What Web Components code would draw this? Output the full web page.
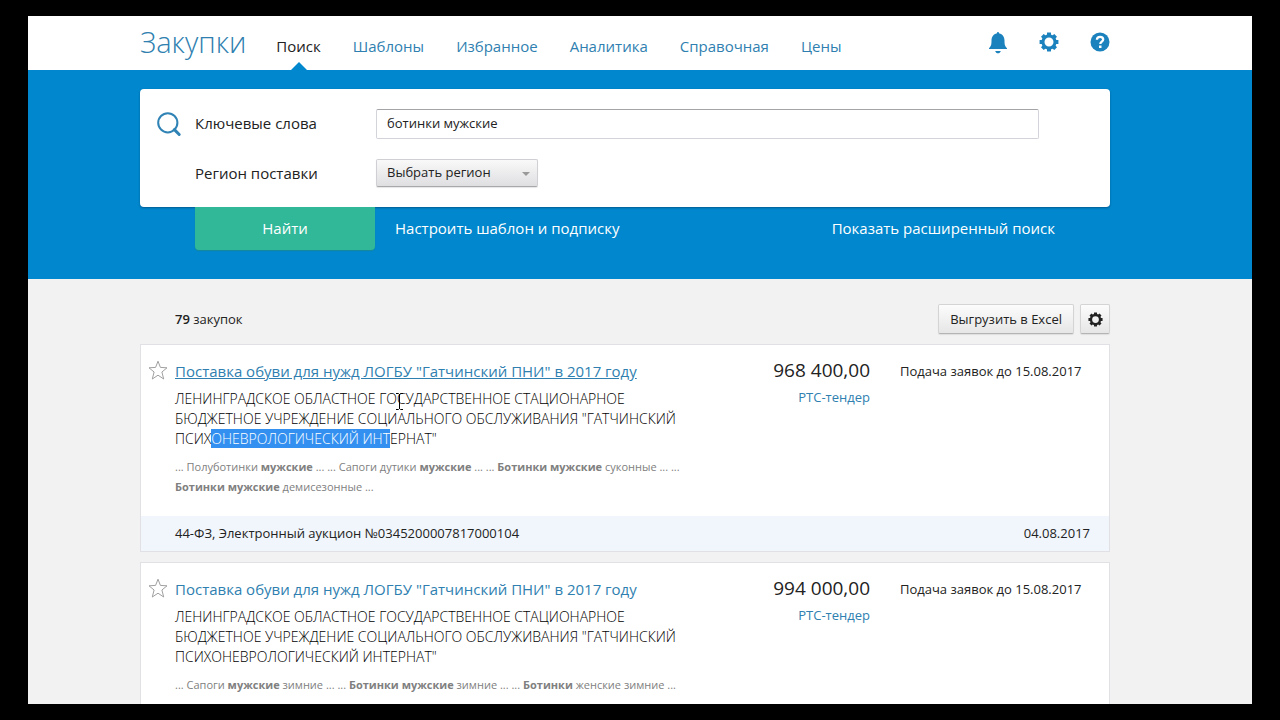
<!DOCTYPE html>
<html lang="ru">
<head>
<meta charset="utf-8">
<title>Закупки</title>
<style>
  html, body { margin: 0; height: 100%; }
  body {
    box-sizing: border-box;
    padding: 16px 28px;
    background: #000;
    color: #222;
    font: 13px/20px "Open Sans", "Noto Sans", sans-serif;
    overflow: hidden;
    --accent: #0087cd;
    --link: #2f7fb0;
    --gutter-left: 112px;
    --gutter-right: 142px;
  }
</style>
</head>
<body>
<purchase-app></purchase-app>

<script>
const define = (name, html, setup) => {
  const template = document.createElement('template');
  template.innerHTML = html;
  customElements.define(name, class extends HTMLElement {
    constructor() {
      super();
      this.attachShadow({ mode: 'open' }).append(template.content.cloneNode(true));
    }
    connectedCallback() { if (setup) setup(this, this.shadowRoot); }
  });
};

/* Icons */
const gearTeeth = (n, r1, r2, a, b) => {
  let d = '';
  for (let i = 0; i < n; i++) {
    const c = i * 2 * Math.PI / n;
    [[-a, r1], [-b, r2], [b, r2], [a, r1]].forEach(([o, r], k) => {
      d += (i || k ? 'L' : 'M') + (10 + r * Math.sin(c + o)).toFixed(2) + ' ' + (10 - r * Math.cos(c + o)).toFixed(2);
    });
  }
  return d + 'Z';
};
const icons = {
  bell: '<path fill="currentColor" d="M9 1.2C9 -.4 11 -.4 11 1.2 14.800 2 16.500 5 16.500 8.500 16.500 13 17 14.200 19 16.200V17H1V16.200C3 14.200 3.500 13 3.500 8.500 3.500 5 5.200 2 9 1.200ZM7.200 19H12.800C12.300 20.500 11.300 21.300 10 21.300S7.700 20.500 7.200 19Z"/>',
  gear: `<path fill="currentColor" fill-rule="evenodd" d="${gearTeeth(8, 7.6, 9.6, .28, .2)}M10 5.500A4.500 4.500 0 1 0 10 14.500A4.500 4.500 0 1 0 10 5.500Z"/>`,
  help: '<circle cx="10" cy="10" r="9.500" fill="currentColor"/><path d="M6.900 7.700C7 5.700 8.300 4.800 10.100 4.800 12 4.800 13.200 5.900 13.200 7.500 13.200 9.600 10.300 9.600 10.300 12" fill="none" stroke="#fff" stroke-width="2.300"/><path d="M9 13.500H11.500V16H9Z" fill="#fff"/>',
  search: '<circle cx="9" cy="9" r="8" fill="none" stroke="currentColor" stroke-width="1.700"/><path d="M14.500 14.700 18.500 18.700" stroke="currentColor" stroke-width="2.500" stroke-linecap="round"/>',
  star: '<path fill="#fff" stroke="#a0a0a0" stroke-width="1" stroke-linejoin="round" d="M10 1.200 12.400 7.400 19 7.800 13.900 12 15.700 19 10 15.200 4.300 19 6.100 12 1 7.800 7.600 7.400Z"/>'
};
define('ui-icon', `
  <style>
    :host { display: block; width: 20px; height: 20px; }
    svg { display: block; width: 100%; height: 100%; overflow: visible; }
  </style>
  <svg viewBox="0 0 20 20" aria-hidden="true"></svg>`,
  (host, root) => { root.querySelector('svg').innerHTML = icons[host.getAttribute('name')]; });

/* Top navigation */
define('nav-link', `
  <style>
    :host { display: flex; position: relative; }
    a { color: var(--link); font-size: 15px; line-height: 20px; padding: 20px 0 14px; text-decoration: none; }
    :host([active]) a { color: #222; }
    :host([active])::after {
      content: ""; position: absolute; left: calc(50% - 8px); bottom: 0;
      border: 8px solid transparent; border-top: 0; border-bottom-color: var(--accent);
    }
  </style>
  <a href="#"><slot></slot></a>`);

define('site-header', `
  <style>
    :host { display: flex; height: 54px; padding: 0 var(--gutter-right) 0 var(--gutter-left); background: #fff; color: var(--link); }
    .logo { color: var(--link); text-decoration: none; font-size: 29px; font-weight: 300; line-height: 52px; margin-right: 30px; }
    nav { display: flex; gap: 32px; }
    .tools { display: flex; gap: 31px; margin: 16px 0 0 auto; align-items: flex-start; color: #1c82bd; }
    button { display: block; padding: 0; border: 0; background: none; color: inherit; }
  </style>
  <a class="logo" href="#">Закупки</a>
  <nav>
    <nav-link active>Поиск</nav-link><nav-link>Шаблоны</nav-link><nav-link>Избранное</nav-link>
    <nav-link>Аналитика</nav-link><nav-link>Справочная</nav-link><nav-link>Цены</nav-link>
  </nav>
  <div class="tools">
    <button aria-label="Уведомления"><ui-icon name="bell"></ui-icon></button>
    <button aria-label="Настройки"><ui-icon name="gear"></ui-icon></button>
    <button aria-label="Помощь"><ui-icon name="help"></ui-icon></button>
  </div>`);

/* Search form */
define('search-form', `
  <style>
    :host { display: block; background: var(--accent); padding: 19px var(--gutter-right) 29px var(--gutter-left); }
    .panel {
      display: grid; grid-template-columns: 38px 181px 1fr; grid-template-rows: 30px 30px; row-gap: 20px;
      align-items: start; padding: 20px 71px 18px 17px; border-radius: 4px; background: #fff;
      box-shadow: 0 1px 2px rgba(0, 50, 90, .5);
    }
    .panel ui-icon { width: 24px; height: 24px; margin-top: 3px; color: #2f83b5; }
    label { font-size: 15px; line-height: 28px; }
    label[for=region] { grid-column: 2; }
    input, select { box-sizing: border-box; height: 30px; margin: 0; padding: 0 10px 2px; font: inherit; color: #222; border-radius: 2px; }
    input { width: 100%; border: 1px solid #d3d4da; border-top-color: #a4a4a8; background: #fff; outline: 0; }
    .select { position: relative; width: 162px; }
    .select::after { content: ""; position: absolute; right: 8px; top: 13px; border: 4px solid transparent; border-bottom: 0; border-top-color: #999; }
    select {
      display: block; appearance: none; width: 100%; height: 28px;
      border: 1px solid #d0d0d4; border-bottom-color: #a8a8ac;
      background: linear-gradient(#f9f9f9, #dfdfe2); box-shadow: 0 1px 1px rgba(0, 0, 0, .1);
    }
    .actions { display: flex; align-items: flex-start; padding: 0 55px; font-size: 15px; color: #fff; }
    .find { width: 180px; height: 43px; padding: 0 0 2px; border: 0; border-radius: 0 0 4px 4px; background: #30b899; color: #fff; font: inherit; margin-right: 20px; box-shadow: 0 1px 1px #16899b; }
    .actions a { color: #fff; text-decoration: none; line-height: 20px; margin-top: 11px; }
    .more { margin-left: auto; }
  </style>
  <form>
    <div class="panel">
      <ui-icon name="search"></ui-icon>
      <label for="words">Ключевые слова</label>
      <input id="words" type="text" value="ботинки мужские">
      <label for="region">Регион поставки</label>
      <div class="select"><select id="region"><option>Выбрать регион</option></select></div>
    </div>
    <div class="actions">
      <button class="find" type="button">Найти</button>
      <a href="#">Настроить шаблон и подписку</a>
      <a class="more" href="#">Показать расширенный поиск</a>
    </div>
  </form>`);

/* Results */
define('tool-button', `
  <style>
    :host { display: block; }
    button {
      display: flex; align-items: center; justify-content: center; box-sizing: border-box; height: 30px; min-width: 30px; padding: 0 11px;
      border: 1px solid #d4d4d4; border-bottom-color: #b4b4b4; border-radius: 2px; font: inherit; color: #222;
      background: linear-gradient(#fcfcfc, #e6e6e6); box-shadow: 0 1px 1px rgba(0, 0, 0, .08);
    }
    :host([square]) button { padding: 0 6px; }
  </style>
  <button type="button"><slot></slot></button>`);

define('results-bar', `
  <style>
    :host { display: flex; align-items: center; gap: 6px; padding: 25px 0 10px 35px; }
    p { margin: 0 auto 0 0; }
    b { font-weight: 600; }
    ui-icon { width: 15px; height: 15px; color: #222; }
  </style>
  <p><b>79</b> закупок</p>
  <tool-button>Выгрузить в Excel</tool-button>
  <tool-button square><ui-icon name="gear"></ui-icon></tool-button>`);

define('purchase-card', `
  <style>
    :host { display: block; border: 1px solid #e1e1e5; background: #fff; }
    .body { display: grid; grid-template-columns: 34px 1fr 160px 239px; padding: 15px 0 19px; }
    .star { justify-self: start; align-self: start; margin-left: 7px; padding: 0; border: 0; background: none; }
    .title { font-size: 15px; line-height: 22px; }
    .title ::slotted(a) { color: var(--link); text-decoration: none; }
    :host([hovered]) .title ::slotted(a) { text-decoration: underline; }
    .org { position: relative; margin: 7px 0 8px; font-size: 14px; font-weight: 300; color: #000; }
    .snippet { color: #808080; font-size: 11px; }
    .price { text-align: right; }
    .sum { font-size: 19px; line-height: 20px; margin-bottom: 7px; }
    .site { color: var(--link); text-decoration: none; }
    .until { box-sizing: border-box; padding-left: 30px; line-height: 22px; }
    footer { display: flex; justify-content: space-between; padding: 7px 19px 8px 34px; background: #f1f6fc; }
  </style>
  <div class="body">
    <button class="star" type="button" aria-label="В избранное"><ui-icon name="star"></ui-icon></button>
    <div>
      <div class="title"><slot name="title"></slot></div>
      <div class="org"><slot name="org"></slot></div>
      <div class="snippet"><slot name="snippet"></slot></div>
    </div>
    <div class="price">
      <div class="sum"><slot name="sum"></slot></div>
      <a class="site" href="#">РТС-тендер</a>
    </div>
    <div class="until">Подача заявок до 15.08.2017</div>
  </div>
  <footer><slot name="number"></slot><slot name="date"></slot></footer>`);

/* I-beam pointer that lies over the text */
define('text-cursor', `
  <style>
    :host { position: absolute; left: 220px; top: 4px; width: 9px; height: 17px; }
    svg { display: block; }
  </style>
  <svg width="9" height="17" viewBox="0 0 9 17" aria-hidden="true"><path d="M1 .5H3.500L4.500 1.500 5.500 .5H8M4.500 1V16M1 16.500H3.500L4.500 15.500 5.500 16.500H8" fill="none" stroke="#000"/></svg>`);

define('purchase-app', `
  <style>
    :host { display: flex; flex-direction: column; height: 100%; overflow: hidden; background: #f2f2f2; }
    site-header, search-form, main { flex: none; }
    main { padding: 0 var(--gutter-right) 0 var(--gutter-left); }
    purchase-card { margin-bottom: 10px; }
    ::highlight(picked) { background-color: #3390f0; color: #fff; }
    b { font-weight: 700; }
  </style>
  <site-header></site-header>
  <search-form></search-form>
  <main>
    <results-bar></results-bar>
    <purchase-card hovered>
      <a slot="title" href="#">Поставка обуви для нужд ЛОГБУ "Гатчинский ПНИ" в 2017 году</a>
      <span slot="org" data-picked="ОНЕВРОЛОГИЧЕСКИЙ ИНТ">ЛЕНИНГРАДСКОЕ ОБЛАСТНОЕ ГОСУДАРСТВЕННОЕ СТАЦИОНАРНОЕ БЮДЖЕТНОЕ УЧРЕЖДЕНИЕ СОЦИАЛЬНОГО ОБСЛУЖИВАНИЯ "ГАТЧИНСКИЙ ПСИХОНЕВРОЛОГИЧЕСКИЙ ИНТЕРНАТ"<text-cursor></text-cursor></span>
      <span slot="snippet">... Полуботинки <b>мужские</b> ... ... Сапоги дутики <b>мужские</b> ... ... <b>Ботинки мужские</b> суконные ... ... <b>Ботинки мужские</b> демисезонные ...</span>
      <span slot="sum">968 400,00</span>
      <span slot="number">44-ФЗ, Электронный аукцион №0345200007817000104</span>
      <span slot="date">04.08.2017</span>
    </purchase-card>
    <purchase-card>
      <a slot="title" href="#">Поставка обуви для нужд ЛОГБУ "Гатчинский ПНИ" в 2017 году</a>
      <span slot="org">ЛЕНИНГРАДСКОЕ ОБЛАСТНОЕ ГОСУДАРСТВЕННОЕ СТАЦИОНАРНОЕ БЮДЖЕТНОЕ УЧРЕЖДЕНИЕ СОЦИАЛЬНОГО ОБСЛУЖИВАНИЯ "ГАТЧИНСКИЙ ПСИХОНЕВРОЛОГИЧЕСКИЙ ИНТЕРНАТ"</span>
      <span slot="snippet">... Сапоги <b>мужские</b> зимние ... ... <b>Ботинки мужские</b> зимние ... ... <b>Ботинки</b> женские зимние ...</span>
      <span slot="sum">994 000,00</span>
    </purchase-card>
  </main>`,
  (host, root) => {
    const span = root.querySelector('[data-picked]');
    const text = span.firstChild;
    const start = text.data.indexOf(span.dataset.picked);
    const range = new Range();
    range.setStart(text, start);
    range.setEnd(text, start + span.dataset.picked.length);
    CSS.highlights.set('picked', new Highlight(range));
  });
</script>
</body>
</html>
